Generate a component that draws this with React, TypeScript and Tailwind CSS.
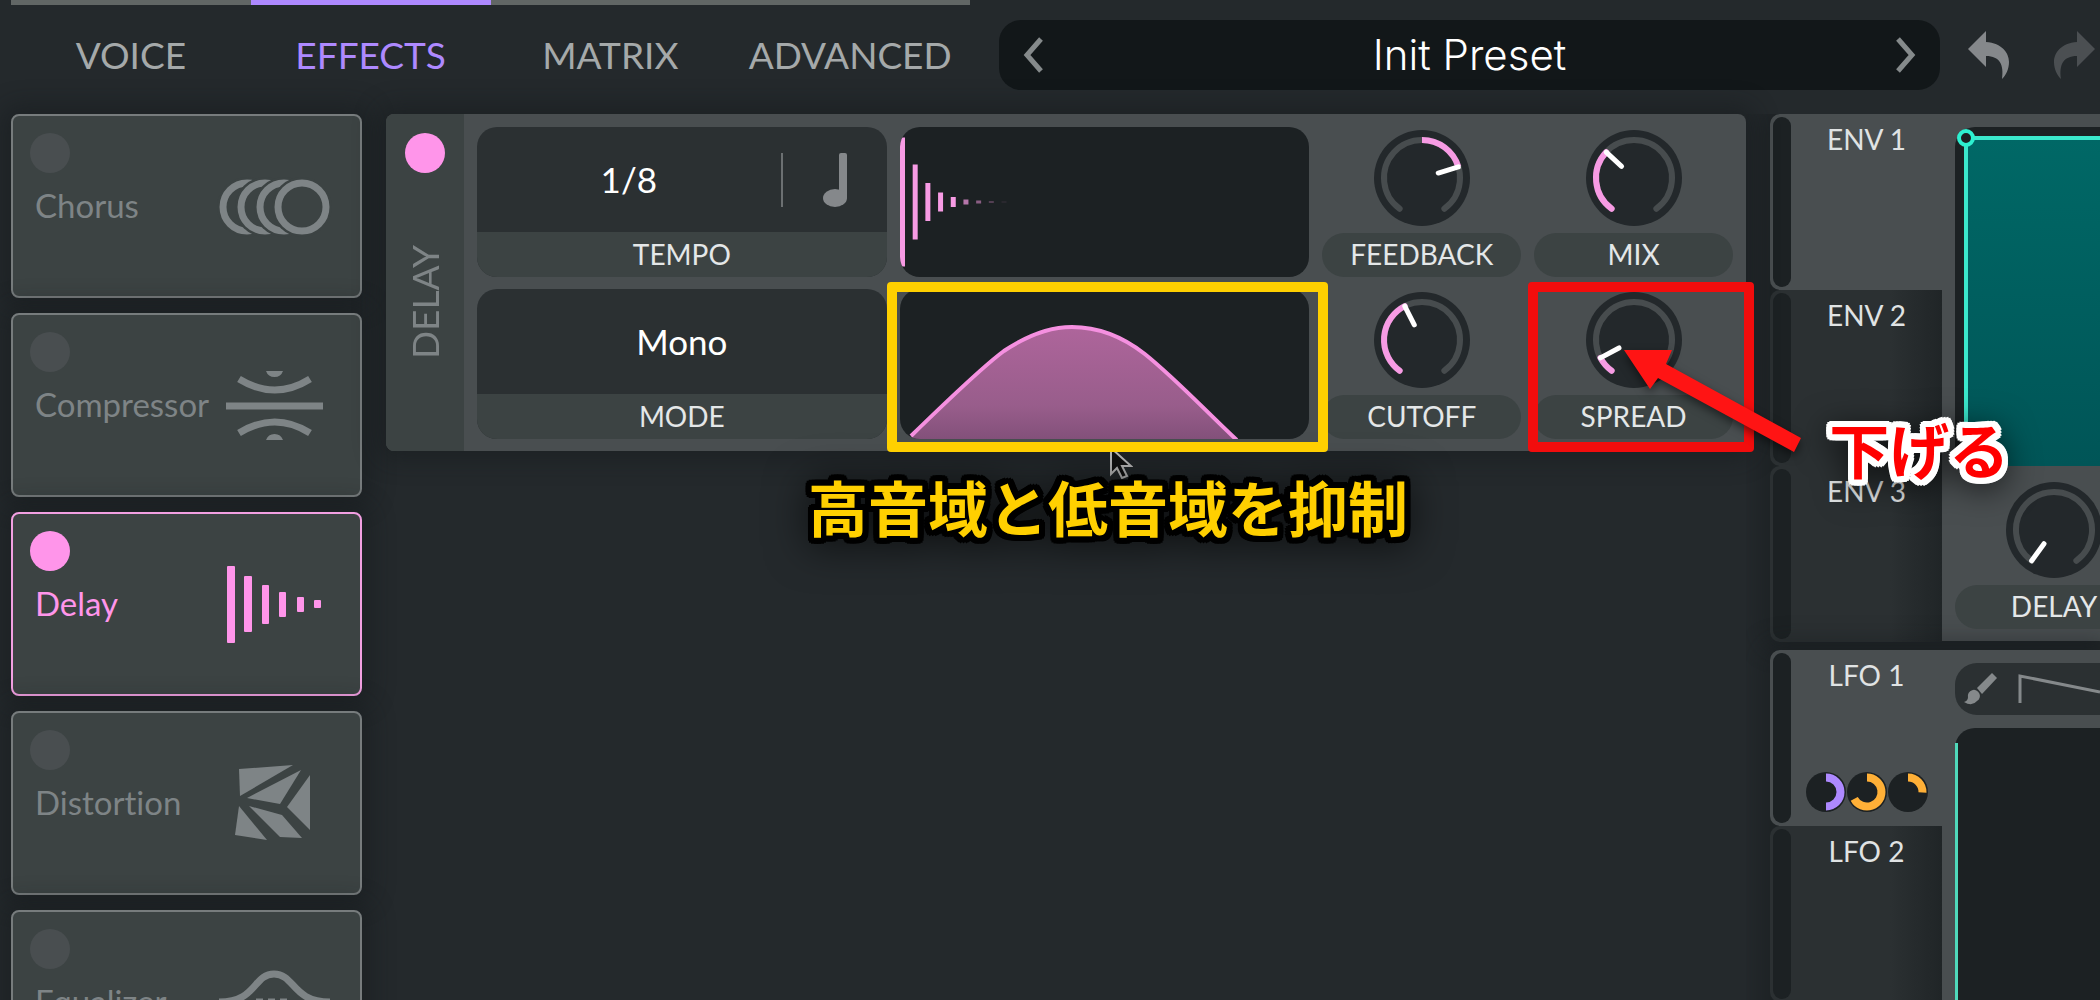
import React from "react";

function polar(c: number, r: number, deg: number) {
  const a = (deg * Math.PI) / 180;
  return [c + r * Math.sin(a), c - r * Math.cos(a)];
}

function arc(c: number, r: number, from: number, to: number) {
  const [x0, y0] = polar(c, r, from);
  const [x1, y1] = polar(c, r, to);
  return `M${x0} ${y0}A${r} ${r} 0 ${to - from > 180 ? 1 : 0} 1 ${x1} ${y1}`;
}

type KnobProps = { label: string; angle: number; from?: number };

function Knob({ label, angle, from = -144 }: KnobProps) {
  const [x0, y0] = polar(49, 38, angle);
  const [x1, y1] = polar(49, 17, angle);
  return (
    <label className="relative flex h-[150px] flex-col items-center justify-between">
      <svg viewBox="0 0 98 98" className="mt-[2px] size-[98px]" fill="none">
        <circle cx="49" cy="49" r="48" fill="#23282b" />
        <path d={arc(49, 38, -144, 144)} stroke="#474c4e" strokeWidth="6" strokeLinecap="round" />
        {angle > from && (
          <path d={arc(49, 38, from, angle)} stroke="#f79be4" strokeWidth="6" strokeLinecap={from === 0 ? "butt" : "round"} />
        )}
        <line x1={x0} y1={y0} x2={x1} y2={y1} stroke="#fff" strokeWidth="5" strokeLinecap="round" />
      </svg>
      <span className="flex h-[44px] w-full items-center justify-center rounded-full bg-[#3c4343] pb-[2px] text-[28px] leading-none text-[#e4e7e8]">
        {label}
      </span>
      <input
        type="range"
        min={-144}
        max={144}
        defaultValue={angle}
        aria-label={label}
        className="absolute inset-0 size-full cursor-pointer opacity-0"
      />
    </label>
  );
}

const icons: Record<string, React.ReactNode> = {
  Chorus: (
    <g>
      {[28, 46, 65, 83].map((cx) => (
        <g key={cx}>
          <circle cx={cx} cy="32" r="30" fill="#3c4343" />
          <circle cx={cx} cy="32" r="24" fill="none" stroke="currentColor" strokeWidth="7" />
        </g>
      ))}
    </g>
  ),
  Compressor: (
    <g fill="none" stroke="currentColor" strokeWidth="7">
      <path d="M7 32h97M20 5q36 22 71 0M20 59q36 -22 71 0" />
      <path d="M47 -3h17a9 9 0 0 1 -17 0zM47 66h17a9 9 0 0 0 -17 0z" fill="currentColor" stroke="none" />
    </g>
  ),
  Delay: (
    <g fill="currentColor">
      <rect x="8" y="-7" width="8" height="77" rx="1" />
      <rect x="25" y="3" width="8" height="56" rx="1" />
      <rect x="43" y="12" width="7" height="39" rx="1" />
      <rect x="60" y="19" width="7" height="25" rx="1" />
      <rect x="78" y="24" width="7" height="15" rx="1" />
      <rect x="95" y="27" width="7" height="8" rx="1" />
    </g>
  ),
  Distortion: (
    <g fill="currentColor">
      <path d="M20 -3L74 -7L21 24z" />
      <path d="M82 -2L28 26L61 32z" />
      <path d="M91 3V58L68 35z" />
      <path d="M30 34L63 43L83 66L61 65z" />
      <path d="M20 34L48 68L16 63z" />
    </g>
  ),
  Equalizer: (
    <g fill="none" stroke="currentColor" strokeWidth="7">
      <path d="M0 31C38 31 34 3 55 3S73 31 111 31" />
      <path d="M37 31h35" strokeDasharray="7 5" />
    </g>
  ),
};

function EffectCard({ name, on = false }: { name: string; on?: boolean }) {
  return (
    <article
      className={
        "flex h-[184px] shrink-0 justify-between rounded-lg border-2 bg-[#3c4343] pr-[30px] pl-[17px] shadow-[0_0_24px_8px_rgba(20,24,26,0.45)] " +
        (on ? "border-[#f2a0e2] text-[#ff95ea]" : "border-[#777c7d] text-[#7e8486]")
      }
    >
      <label className="flex flex-col pt-[17px] text-[33px] leading-10">
        <input
          type="checkbox"
          defaultChecked={on}
          className="size-10 appearance-none rounded-full bg-[#494e50] checked:bg-[#ff95ea]"
        />
        <span className="mt-3 pl-[5px]">{name}</span>
      </label>
      <svg viewBox="0 0 111 64" className="mt-[59px] h-16 w-[111px] shrink-0 overflow-visible">
        {icons[name]}
      </svg>
    </article>
  );
}

const tabs = ["VOICE", "EFFECTS", "MATRIX", "ADVANCED"];

function Header() {
  return (
    <header className="grid h-[114px] grid-cols-[988fr_941fr_160fr] pl-[11px]">
      <nav className="mr-[29px] grid h-[105px] grid-cols-4">
        {tabs.map((t) => (
          <button
            key={t}
            className={
              "border-t-[5px] pb-[2px] text-[37px] leading-none " +
              (t === "EFFECTS" ? "border-[#ae89ff] text-[#ae89ff]" : "border-[#616665] text-[#a5a9aa]")
            }
          >
            {t}
          </button>
        ))}
      </nav>
      <div className="mt-5 flex h-[70px] items-center justify-between rounded-[22px] bg-[#121719] px-6 text-[#858a8b]">
        <button aria-label="Previous preset">
          <svg viewBox="0 0 20 36" className="h-9 w-5" fill="none" stroke="currentColor" strokeWidth="5">
            <path d="M18 2L4 18L18 34" />
          </svg>
        </button>
        <button className="font-['Inter'] text-[42px] leading-none font-light text-white">Init Preset</button>
        <button aria-label="Next preset">
          <svg viewBox="0 0 20 36" className="h-9 w-5" fill="none" stroke="currentColor" strokeWidth="5">
            <path d="M2 2L16 18L2 34" />
          </svg>
        </button>
      </div>
      <div className="mt-5 flex h-[70px] items-center justify-between pr-[5px] pl-7">
        <button aria-label="Undo" className="text-[#85888b]">
          <svg viewBox="0 0 42 48" className="h-12 w-[42px]" fill="currentColor">
            <path d="M0 18L18 0V11C34 12 41 22 41 31C41 38 38 44 34 48C36 34 32 25 18 25V36z" />
          </svg>
        </button>
        <button aria-label="Redo" className="text-[#4b4f52]">
          <svg viewBox="0 0 42 48" className="h-12 w-[42px]" fill="currentColor">
            <path d="M42 18L24 0V11C8 12 1 22 1 31C1 38 4 44 8 48C6 34 10 25 24 25V36z" />
          </svg>
        </button>
      </div>
    </header>
  );
}

const echoes = [129, 75, 38, 19, 10, 5, 3, 2, 1];
const echoOpacity = [1, 1, 1, 1, 1, 0.7, 0.5, 0.25, 0.12];

function EchoDisplay() {
  return (
    <div className="h-[150px] overflow-hidden rounded-[20px] bg-[#1c2123]">
      <svg viewBox="0 0 410 150" preserveAspectRatio="none" className="size-full">
        {echoes.map((h, i) => (
          <rect key={i} x={i * 12.7} y={75 - h / 2} width="5" height={h} fill="#f79be4" opacity={echoOpacity[i]} />
        ))}
      </svg>
    </div>
  );
}

function FilterDisplay() {
  const curve = "M11 147C50 109 85 76 104 62C128 46 150 38 172 38C198 38 222 47 245 65C275 89 305 121 337 151";
  return (
    <div className="relative z-10 h-[150px]">
      <div className="size-full overflow-hidden rounded-[20px] bg-[#1c2123]">
        <svg viewBox="0 0 410 150" preserveAspectRatio="none" className="size-full">
          <defs>
            <linearGradient id="band" x1="0" y1="0" x2="0" y2="1">
              <stop offset="0" stopColor="#ae659b" />
              <stop offset="0.7" stopColor="#985d8b" />
              <stop offset="1" stopColor="#82507a" />
            </linearGradient>
          </defs>
          <path d={curve + "H14z"} fill="url(#band)" />
          <path d={curve} fill="none" stroke="#f590e0" strokeWidth="4" />
        </svg>
      </div>
      <div className="pointer-events-none absolute -top-[7px] -right-[19px] -bottom-[13px] -left-[13px] rounded-[4px] border-10 border-[#ffd000]" />
    </div>
  );
}

function DelayPanel() {
  return (
    <section className="relative z-20 flex h-[337px] rounded-lg bg-[#494e50] shadow-[0_0_24px_8px_rgba(20,24,26,0.45)]">
      <div className="flex w-[78px] shrink-0 flex-col items-center rounded-l-lg bg-[#3c4343] pt-[19px]">
        <input
          type="checkbox"
          defaultChecked
          aria-label="Delay enabled"
          className="size-10 appearance-none rounded-full bg-[#494e50] checked:bg-[#ff95ea]"
        />
        <h2 className="mt-[72px] rotate-180 text-[37px] leading-10 text-[#7e8486] [writing-mode:vertical-rl]">DELAY</h2>
      </div>
      <div className="grid flex-1 grid-cols-[410fr_410fr_199fr_199fr] content-start gap-x-[13px] gap-y-3 p-[13px]">
        <div className="flex h-[150px] flex-col overflow-hidden rounded-[20px] bg-[#2b3032]">
          <div className="flex flex-1 items-center">
            <select
              id="tempo"
              className="h-full flex-1 appearance-none text-center text-[35px] text-white [text-align-last:center]"
            >
              <option>1/8</option>
            </select>
            <button aria-label="Tempo sync" className="flex h-[54px] w-[106px] items-center justify-center border-l-2 border-[#6c7072]">
              <svg viewBox="0 0 24 54" className="h-[54px] w-6" fill="#85888b">
                <rect x="16" y="0" width="8" height="46" rx="2" />
                <ellipse cx="12" cy="45" rx="12" ry="9" />
              </svg>
            </button>
          </div>
          <label
            htmlFor="tempo"
            className="flex h-[45px] items-center justify-center bg-[#3c4343] pb-[2px] text-[28px] leading-none text-[#e4e7e8]"
          >
            TEMPO
          </label>
        </div>
        <EchoDisplay />
        <Knob label="FEEDBACK" angle={73} from={0} />
        <Knob label="MIX" angle={-47} />
        <div className="flex h-[150px] flex-col overflow-hidden rounded-[20px] bg-[#2b3032]">
          <select
            id="mode"
            className="flex-1 appearance-none text-center text-[35px] text-white [text-align-last:center]"
          >
            <option>Mono</option>
          </select>
          <label
            htmlFor="mode"
            className="flex h-[45px] items-center justify-center bg-[#3c4343] pb-[2px] text-[28px] leading-none text-[#e4e7e8]"
          >
            MODE
          </label>
        </div>
        <FilterDisplay />
        <Knob label="CUTOFF" angle={-27} />
        <div className="relative">
          <Knob label="SPREAD" angle={-118} />
          <div className="pointer-events-none absolute -top-[7px] -right-[21px] -bottom-[13px] -left-[6px] rounded-[4px] border-10 border-[#f20d0d]" />
          <svg
            viewBox="0 0 180 106"
            className="pointer-events-none absolute top-[60px] left-[90px] h-[106px] w-[180px] overflow-visible drop-shadow-[0_4px_5px_rgba(0,0,0,0.5)]"
          >
            <path d="M0 1L48 1L42 15L177 89L170 103L34 29L26 40z" fill="#ff1414" />
          </svg>
          <p className="pointer-events-none absolute top-[115px] left-[295px] font-['Noto_Sans_CJK_JP',sans-serif] text-[60px] leading-[88px] font-bold whitespace-nowrap text-[#ff0000] [filter:drop-shadow(0_6px_16px_rgba(0,0,0,0.6))] [text-shadow:3px_0_#fff,-3px_0_#fff,0_3px_#fff,0_-3px_#fff,6px_0_#fff,-6px_0_#fff,0_6px_#fff,0_-6px_#fff,6px_3px_#fff,6px_-3px_#fff,-6px_3px_#fff,-6px_-3px_#fff,3px_6px_#fff,3px_-6px_#fff,-3px_6px_#fff,-3px_-6px_#fff,5px_5px_#fff,5px_-5px_#fff,-5px_5px_#fff,-5px_-5px_#fff]">
            下げる
          </p>
        </div>
      </div>
      <svg viewBox="0 0 24 34" className="pointer-events-none absolute top-[332px] left-[723px] h-[34px] w-6">
        <path d="M2 2V28L8 22L13 32L18 30L13 20H22z" fill="#111" stroke="#b8b8b8" strokeWidth="2" />
      </svg>
      <p className="pointer-events-none absolute top-[348px] left-[422px] font-['Noto_Sans_CJK_JP',sans-serif] text-[60px] leading-[88px] font-bold whitespace-nowrap text-[#ffd000] [filter:drop-shadow(0_4px_20px_rgba(0,0,0,0.6))] [text-shadow:3px_0_#000,-3px_0_#000,0_3px_#000,0_-3px_#000,6px_0_#000,-6px_0_#000,0_6px_#000,0_-6px_#000,6px_3px_#000,6px_-3px_#000,-6px_3px_#000,-6px_-3px_#000,3px_6px_#000,3px_-6px_#000,-3px_6px_#000,-3px_-6px_#000,5px_5px_#000,5px_-5px_#000,-5px_5px_#000,-5px_-5px_#000]">
        高音域と低音域を抑制
      </p>
    </section>
  );
}

function ModSlot({ name, active = false, children }: { name: string; active?: boolean; children?: React.ReactNode }) {
  return (
    <button
      className={
        "flex h-[176px] w-full shrink-0 rounded-l-[10px] p-[3px] pr-0 " +
        (active ? "bg-[#494e50]" : "bg-linear-to-r from-[#2b3032] from-70% to-[#202527]")
      }
    >
      <span className="h-full w-[18px] rounded-full bg-[#1c2123]" />
      <span className="flex h-full flex-1 flex-col items-center justify-between pt-2 pb-[11px] text-[28px] leading-7 text-[#e0e3e4]">
        {name}
        {children}
      </span>
    </button>
  );
}

function Amount({ to, color }: { to: number; color: string }) {
  return (
    <svg viewBox="0 0 40 40" className="size-10" fill="none">
      <circle cx="20" cy="20" r="20" fill="#1c2123" />
      <path d={arc(20, 14.5, 0, to)} stroke={color} strokeWidth="8" />
    </svg>
  );
}

function Modulators() {
  return (
    <aside className="flex flex-col gap-[9px] overflow-hidden pl-[24px]">
      <section className="flex h-[527px] shrink-0 rounded-l-[10px] bg-[#1d2224] shadow-[0_0_24px_8px_rgba(20,24,26,0.45)]">
        <div className="w-[172px] shrink-0">
          <ModSlot name="ENV 1" active />
          <ModSlot name="ENV 2" />
          <ModSlot name="ENV 3" />
        </div>
        <div className="flex flex-1 flex-col overflow-hidden bg-[#494e50] pt-[13px] pl-[13px]">
          <div className="h-[339px] shrink-0 rounded-tl-[20px] bg-[#1c2123]">
            <svg viewBox="0 0 145 339" preserveAspectRatio="none" className="size-full overflow-visible">
              <defs>
                <linearGradient id="env" x1="0" y1="0" x2="0" y2="1">
                  <stop offset="0" stopColor="#006866" />
                  <stop offset="1" stopColor="#005557" />
                </linearGradient>
              </defs>
              <rect x="11" y="11" width="134" height="328" fill="url(#env)" />
              <path d="M145 11H11V339" fill="none" stroke="#3be8cc" strokeWidth="4" />
              <circle cx="11" cy="11" r="7" fill="#1c2123" stroke="#2df0d0" strokeWidth="4" />
            </svg>
          </div>
          <div className="mt-[13px] w-[198px]">
            <Knob label="DELAY" angle={-144} />
          </div>
        </div>
      </section>
      <section className="flex flex-1 rounded-l-[10px] bg-[#1d2224] shadow-[0_0_24px_8px_rgba(20,24,26,0.45)]">
        <div className="w-[172px] shrink-0">
          <ModSlot name="LFO 1" active>
            <span className="flex gap-px">
              <Amount to={180} color="#ae89ff" />
              <Amount to={242} color="#ffb037" />
              <Amount to={92} color="#ffb037" />
            </span>
          </ModSlot>
          <ModSlot name="LFO 2" />
        </div>
        <div className="flex flex-1 flex-col gap-[13px] overflow-hidden bg-[#494e50] pt-[13px] pl-[13px]">
          <div className="flex h-[52px] shrink-0 items-center rounded-l-[22px] bg-[#2b3032] text-[#85898b]">
            <button aria-label="Paint" className="pl-[9px]">
              <svg viewBox="0 0 34 34" className="size-[34px]" fill="currentColor">
                <path d="M28 1L33 6L18 22L13 16z" />
                <path d="M0 30Q4 29 4 25A6 6 0 1 1 13 29Q8 35 0 30z" />
              </svg>
            </button>
            <button aria-label="Saw shape" className="min-w-0 flex-1 pl-5">
              <svg viewBox="0 0 82 32" className="h-8 w-[82px]" fill="none" stroke="currentColor" strokeWidth="3">
                <path d="M2 30V3L82 19" />
              </svg>
            </button>
          </div>
          <div className="flex-1 rounded-tl-[20px] bg-[#1c2123] pt-[15px]">
            <div className="h-full w-[3px] bg-[#4fd8ba]" />
          </div>
        </div>
      </section>
    </aside>
  );
}

const effects = ["Chorus", "Compressor", "Delay", "Distortion", "Equalizer"];

export default function App() {
  return (
    <div className="flex h-screen flex-col overflow-hidden bg-[#24292c] font-['Lato',sans-serif] [font-variant-ligatures:none]">
      <Header />
      <main className="grid min-h-0 flex-1 grid-cols-[375fr_1360fr_354fr] pl-[11px]">
        <div className="mr-6 flex flex-col gap-[15px]">
          {effects.map((e) => (
            <EffectCard key={e} name={e} on={e === "Delay"} />
          ))}
        </div>
        <DelayPanel />
        <Modulators />
      </main>
    </div>
  );
}
